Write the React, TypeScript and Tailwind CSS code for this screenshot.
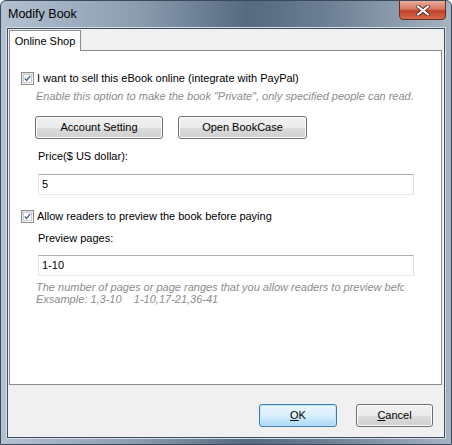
import React from "react";

const font = { fontFamily: '"Liberation Sans", Arial, sans-serif' };

function Check() {
  return (
    <span className="flex h-[13px] w-[13px] shrink-0 items-center justify-center border border-[#8f8f8f] bg-gradient-to-br from-[#dcdcdc] to-[#fdfdfd]">
      <span className="flex h-[9px] w-[9px] items-center justify-center border border-[#c8cdd4] bg-white">
        <svg width="9" height="9" viewBox="0 0 9 9">
          <path d="M1 4.5 L3.4 7 L8 1" fill="none" stroke="#4a5f97" strokeWidth="1.7" />
        </svg>
      </span>
    </span>
  );
}

function Btn({ children, w, def }: { children: React.ReactNode; w: string; def?: boolean }) {
  return (
    <div
      className={
        "flex h-[23px] items-center justify-center rounded-[3px] border text-[11px] text-black " +
        w +
        (def
          ? " border-[#3c7fb1] bg-gradient-to-b from-[#eaf6fd] via-[#d9f0fc] to-[#a7d9f5] shadow-[inset_0_0_0_1px_#bfe6fb]"
          : " border-[#707070] bg-[linear-gradient(to_bottom,#f2f2f2_0%,#ebebeb_50%,#dddddd_51%,#cfcfcf_100%)] shadow-[inset_0_0_0_1px_#fcfcfc]")
      }
    >
      {children}
    </div>
  );
}

function Input({ value }: { value: string }) {
  return (
    <div className="ml-[28px] flex h-[21px] w-[376px] items-center border border-[#abadb3] border-b-[#e3e9ef] border-l-[#e2e3ea] border-r-[#dbdfe6] bg-white pl-[3px] text-[11px] text-black">
      {value}
    </div>
  );
}

export default function App() {
  return (
    <div
      className="relative flex h-[445px] w-[452px] flex-col overflow-hidden rounded-t-[6px] border border-[#3a4a5c] bg-[linear-gradient(to_right,#b3c1d0_0%,#8c9db0_30%,#55697f_55%,#6b7e93_72%,#a5b3c2_100%)]"
      style={font}
    >
      {/* title bar */}
      <div className="flex h-[27px] shrink-0 items-center pl-[7px] text-[12.5px] text-black">Modify Book</div>
      <div className="absolute right-[5px] top-[-1px] flex h-[20px] w-[47px] items-center justify-center rounded-b-[4px] border border-[#6b2a22] bg-[linear-gradient(to_bottom,#e9ad9e_0%,#d6775f_45%,#c23f27_55%,#d56b4c_100%)]">
        <svg width="14" height="11" viewBox="0 0 14 11">
          <path d="M2 1.5 L12 9.5 M12 1.5 L2 9.5" stroke="#4a2a26" strokeWidth="3.6" strokeLinecap="round" />
          <path d="M2 1.5 L12 9.5 M12 1.5 L2 9.5" stroke="#fff" strokeWidth="2.2" strokeLinecap="round" />
        </svg>
      </div>

      {/* client area */}
      <div className="mx-[6px] mb-[6px] flex flex-1 flex-col border border-[#3e4e60] bg-[#f0f0f0] shadow-[0_0_0_1px_#d6dde6]">
        <div className="flex flex-col pl-[1px] pr-[2px] pt-[1px]">
          {/* tab header */}
          <div className="flex h-[20px]">
            <div className="relative z-10 flex h-[21px] w-[72px] items-center justify-center border border-b-0 border-[#898c95] bg-white text-[11px] text-black">
              Online Shop
            </div>
          </div>
          {/* tab panel */}
          <div className="flex h-[335px] flex-col border border-[#898c95] bg-white text-[11px] leading-[15px] text-black">
            <div className="mt-[20px] flex items-center gap-[3px] pl-[11px]">
              <Check />
              <span>I want to sell this eBook online (integrate with PayPal)</span>
            </div>
            <div className="mt-[4px] pl-[26px] text-[11px] italic leading-[13px] text-[#8c8c8c]">
              Enable this option to make the book "Private", only specified people can read.
            </div>
            <div className="mt-[13px] flex gap-[15px] pl-[25px]">
              <Btn w="w-[128px]">Account Setting</Btn>
              <Btn w="w-[129px]">Open BookCase</Btn>
            </div>
            <div className="mt-[10px] pl-[28px]">Price($ US dollar):</div>
            <div className="mt-[10px]">
              <Input value="5" />
            </div>
            <div className="mt-[14px] flex items-center gap-[3px] pl-[11px]">
              <Check />
              <span>Allow readers to preview the book before paying</span>
            </div>
            <div className="mt-[7px] pl-[28px]">Preview pages:</div>
            <div className="mt-[9px]">
              <Input value="1-10" />
            </div>
            <div className="mt-[5px] w-[394px] overflow-hidden whitespace-nowrap pl-[26px] text-[11px] italic leading-[12px] text-[#8c8c8c]">
              The number of pages or page ranges that you allow readers to preview before paying.
              <br />
              Exsample: 1,3-10&nbsp;&nbsp;&nbsp;&nbsp;1-10,17-21,36-41
            </div>
          </div>
        </div>
        {/* footer */}
        <div className="mt-[19px] flex justify-end gap-[19px] pr-[11px]">
          <Btn w="w-[78px]" def>
            <span className="underline underline-offset-[1px]">O</span>K
          </Btn>
          <Btn w="w-[77px]">
            <span className="underline underline-offset-[1px]">C</span>ancel
          </Btn>
        </div>
      </div>
    </div>
  );
}
